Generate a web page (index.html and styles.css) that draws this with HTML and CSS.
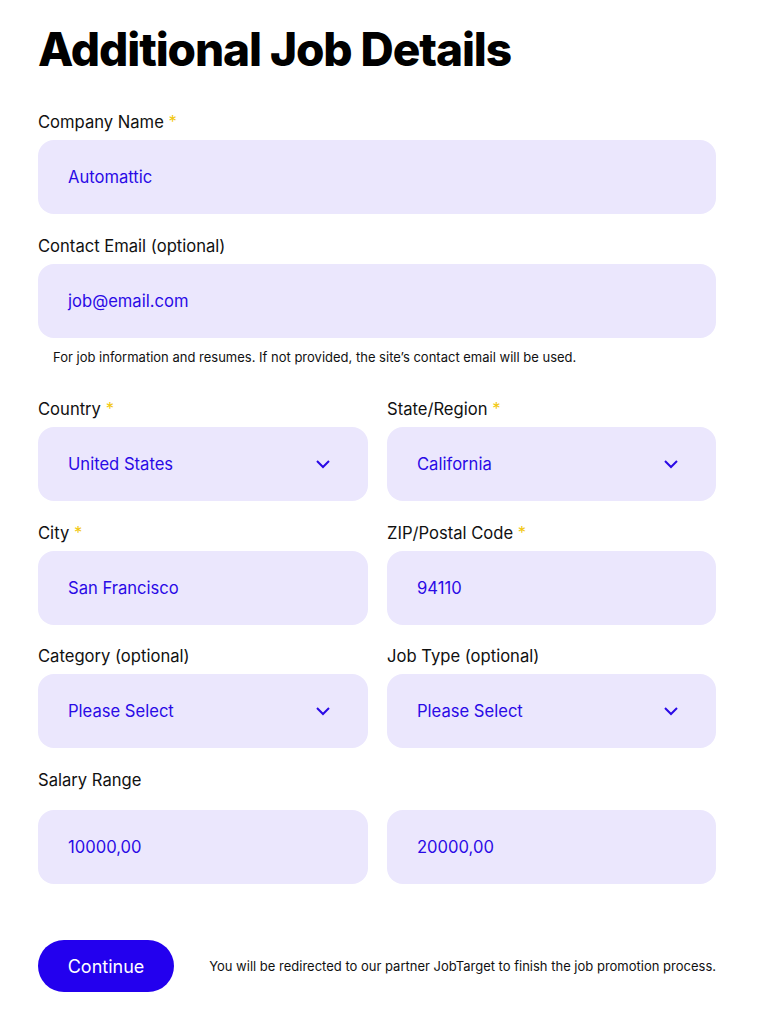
FILE: index.html
```html
<!DOCTYPE html>
<html lang="en">
<head>
<meta charset="utf-8">
<title>Additional Job Details</title>
<link rel="stylesheet" href="styles.css">
</head>
<body>
<main class="page">
  <h1 class="title">Additional Job Details</h1>
  <form class="form">
    <div class="field">
      <label class="label">Company Name <span class="req">*</span></label>
      <div class="input">Automattic</div>
    </div>
    <div class="field">
      <label class="label">Contact Email (optional)</label>
      <div class="input">job@email.com</div>
      <p class="help">For job information and resumes. If not provided, the site’s contact email will be used.</p>
    </div>
    <div class="row">
      <div class="field">
        <label class="label">Country <span class="req">*</span></label>
        <div class="input select">United States<svg class="chev" viewBox="0 0 16 10" width="16" height="10"><path d="M2 2l6 6 6-6" fill="none" stroke="currentColor" stroke-width="2"/></svg></div>
      </div>
      <div class="field">
        <label class="label">State/Region <span class="req">*</span></label>
        <div class="input select">California<svg class="chev" viewBox="0 0 16 10" width="16" height="10"><path d="M2 2l6 6 6-6" fill="none" stroke="currentColor" stroke-width="2"/></svg></div>
      </div>
    </div>
    <div class="row">
      <div class="field">
        <label class="label">City <span class="req">*</span></label>
        <div class="input">San Francisco</div>
      </div>
      <div class="field">
        <label class="label">ZIP/Postal Code <span class="req">*</span></label>
        <div class="input">94110</div>
      </div>
    </div>
    <div class="row">
      <div class="field">
        <label class="label">Category (optional)</label>
        <div class="input select">Please Select<svg class="chev" viewBox="0 0 16 10" width="16" height="10"><path d="M2 2l6 6 6-6" fill="none" stroke="currentColor" stroke-width="2"/></svg></div>
      </div>
      <div class="field">
        <label class="label">Job Type (optional)</label>
        <div class="input select">Please Select<svg class="chev" viewBox="0 0 16 10" width="16" height="10"><path d="M2 2l6 6 6-6" fill="none" stroke="currentColor" stroke-width="2"/></svg></div>
      </div>
    </div>
    <div class="field salary">
      <label class="label">Salary Range</label>
      <div class="row">
        <div class="input">10000,00</div>
        <div class="input">20000,00</div>
      </div>
    </div>
    <div class="actions">
      <button type="button" class="btn">Continue</button>
      <p class="note">You will be redirected to our partner JobTarget to finish the job promotion process.</p>
    </div>
  </form>
</main>
</body>
</html>
```
FILE: styles.css
```css
* { box-sizing: border-box; }
html, body { margin: 0; padding: 0; background: #fff; }
body {
  font-family: Inter, "Noto Sans", sans-serif;
  color: #111;
}
.page {
  padding: 21px 42px 0 38px;
}
.title {
  font-family: Inter, sans-serif;
  font-weight: 800;
  font-size: 46px;
  line-height: 56px;
  letter-spacing: -1.1px;
  margin: 0 0 34px;
  color: #000;
}
.form { display: flex; flex-direction: column; }
.field { display: flex; flex-direction: column; margin-bottom: 20.5px; }
.label {
  font-size: 16.6px;
  line-height: 22px;
  margin-bottom: 7px;
  color: #111;
}
.req { color: #f2c811; }
.input {
  height: 74px;
  border-radius: 16px;
  background: #ebe7fd;
  color: #2a0ae6;
  font-size: 16.6px;
  display: flex;
  align-items: center;
  padding: 0 30px;
}
.select { justify-content: space-between; padding-right: 37px; }
.chev { color: #2a0ae6; width: 16px; height: 10px; flex: none; }
.help {
  font-size: 13px;
  line-height: 16px;
  margin: 11px 0 13px 15px;
  color: #111;
}
.row {
  display: grid;
  grid-template-columns: 330px 329px;
  column-gap: 19px;
}
.row > .field { min-width: 0; }
.salary .label { margin-bottom: 19.5px; }
.salary { margin-bottom: 56px; }
.actions {
  display: flex;
  align-items: center;
  justify-content: space-between;
}
.btn {
  width: 136px;
  height: 52px;
  border: 0;
  border-radius: 26px;
  background: #2300ee;
  color: #fff;
  font-family: Inter, sans-serif;
  font-size: 18px;
  cursor: pointer;
}
.note {
  margin: 0;
  font-size: 13px;
  color: #111;
}
```
